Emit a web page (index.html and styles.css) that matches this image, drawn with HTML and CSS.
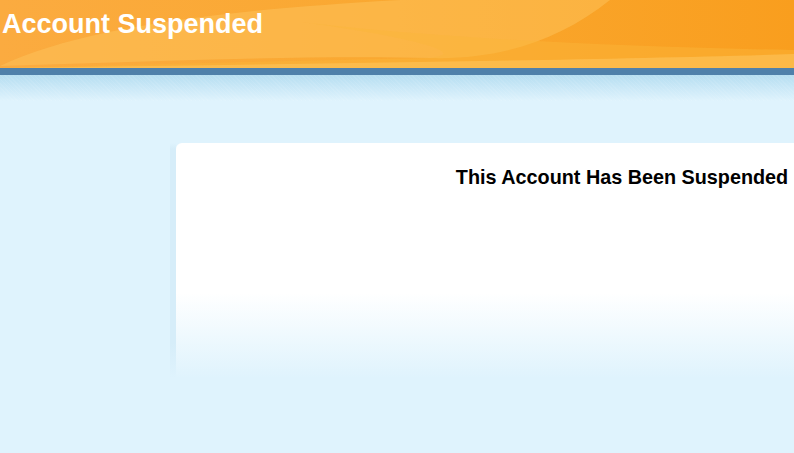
FILE: index.html
```html
<!DOCTYPE html>
<html>
<head>
<meta charset="utf-8">
<link rel="stylesheet" href="styles.css">
</head>
<body>
<div class="page">
  <header class="header">
    <svg class="waves" viewBox="0 0 794 68" preserveAspectRatio="none" width="794" height="68">
      <defs>
        <linearGradient id="base" x1="0" y1="0" x2="1" y2="0">
          <stop offset="0" stop-color="#fbab40"/>
          <stop offset="0.5" stop-color="#faa830"/>
          <stop offset="1" stop-color="#f99e1e"/>
        </linearGradient>
      </defs>
      <rect width="794" height="68" fill="url(#base)"/>
      <path d="M0,66 C80,28 220,10 400,0 L610,0 C560,40 500,60 430,58 C300,55 150,62 0,66 Z" fill="#fdc45c" opacity="0.5"/>
      <path d="M300,22 C420,36 580,46 794,50 L794,68 L0,68 C200,63 320,60 430,58 C480,52 380,32 300,22 Z" fill="#fbb63a" opacity="0.45"/>
      <path d="M0,68 C300,64 600,60 794,54 L794,68 Z" fill="#fdc45c" opacity="0.6"/>
    </svg>
    <h1 class="title">Account Suspended</h1>
  </header>
  <div class="bar"></div>
  <div class="fade"></div>
  <main class="main">
    <div class="card-wrap">
      <section class="card">
        <h2 class="message">This Account Has Been Suspended</h2>
      </section>
    </div>
  </main>
</div>
</body>
</html>
```
FILE: styles.css
```css
html, body {
  margin: 0;
  padding: 0;
  background: #dff3fd;
  overflow: hidden;
}
.page {
  width: 794px;
  height: 453px;
  overflow: hidden;
  font-family: "Liberation Sans", Arial, sans-serif;
}
.header {
  display: grid;
  height: 68px;
}
.waves {
  grid-area: 1 / 1;
  display: block;
}
.title {
  grid-area: 1 / 1;
  margin: 0;
  padding: 9px 0 0 2px;
  font-size: 27px;
  font-weight: bold;
  color: #ffffff;
  line-height: 31px;
  align-self: start;
}
.bar {
  height: 7px;
  background: #4f80aa;
}
.fade {
  height: 26px;
  background:
    repeating-linear-gradient(45deg, rgba(255,255,255,0.08) 0 1px, rgba(255,255,255,0) 1px 3px),
    linear-gradient(to bottom, #b6def1, #dff3fd);
}
.main {
  padding: 42px 0 0 170px;
}
.card-wrap {
  padding-left: 6px;
  background: linear-gradient(to bottom, rgba(214, 237, 249, 0) 0, #d6edf9 6px, #d6edf9 200px, #dff3fd 235px) no-repeat 0 0 / 6px 100%;
}
.card {
  width: 892px;
  height: 240px;
  border-radius: 6px 0 0 0;
  background: linear-gradient(to bottom, #ffffff 0, #ffffff 150px, #dff3fd 235px);
  padding-top: 23px;
  box-sizing: border-box;
}
.message {
  margin: 0;
  text-align: center;
  font-size: 19.8px;
  line-height: 23px;
  font-weight: bold;
  color: #000000;
}
```
